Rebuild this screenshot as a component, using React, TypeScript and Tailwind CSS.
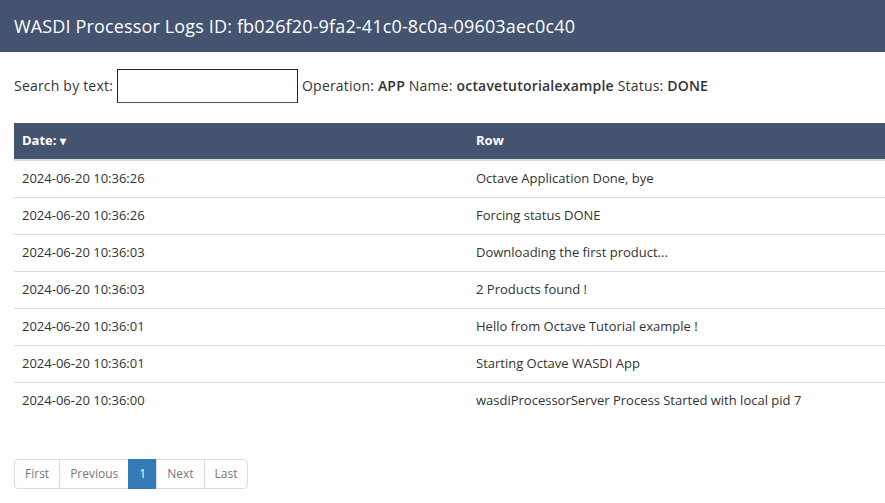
import React from 'react';

const rows = [
  { date: '2024-06-20 10:36:26', row: 'Octave Application Done, bye' },
  { date: '2024-06-20 10:36:26', row: 'Forcing status DONE' },
  { date: '2024-06-20 10:36:03', row: 'Downloading the first product...' },
  { date: '2024-06-20 10:36:03', row: '2 Products found !' },
  { date: '2024-06-20 10:36:01', row: 'Hello from Octave Tutorial example !' },
  { date: '2024-06-20 10:36:01', row: 'Starting Octave WASDI App' },
  { date: '2024-06-20 10:36:00', row: 'wasdiProcessorServer Process Started with local pid 7' },
];

const pages = ['First', 'Previous', '1', 'Next', 'Last'];

export default function App() {
  return (
    <div className="min-h-screen bg-white text-[#333] font-['Open_Sans',sans-serif]">
      {/* Header */}
      <div className="h-[52px] bg-[#435370] flex items-center px-[14px]">
        <h1 className="text-white text-[18px] tracking-[0.15px]">WASDI Processor Logs ID: fb026f20-9fa2-41c0-8c0a-09603aec0c40</h1>
      </div>

      <div className="pl-[14px]">
        {/* Search row */}
        <div className="flex items-center mt-[17px] text-[14px] tracking-[0.2px]">
          <span className="pb-[2px]">Search by text:</span>
          <input className="ml-[4px] w-[181px] h-[34px] border border-[#222] border-b-[#435370] outline-none" />
          <span className="ml-[4px] pb-[2px]">
            Operation: <b className="font-semibold">APP</b> Name: <b className="font-semibold">octavetutorialexample</b> Status:{' '}
            <b className="font-semibold">DONE</b>
          </span>
        </div>

        {/* Table */}
        <table className="w-full mt-[20px] border-collapse text-[13px]">
          <thead>
            <tr className="bg-[#435370] text-white h-[37px] border-b-2 border-[#ddd]">
              <th className="text-left font-bold px-[8px] w-[454px]">
                Date: <span className="text-[12px]">▾</span>
              </th>
              <th className="text-left font-bold px-[8px]">Row</th>
            </tr>
          </thead>
          <tbody>
            {rows.map((r, i) => (
              <tr key={i} className={`h-[37px] ${i < rows.length - 1 ? 'border-b border-[#ddd]' : ''}`}>
                <td className="px-[8px]">{r.date}</td>
                <td className="px-[8px]">{r.row}</td>
              </tr>
            ))}
          </tbody>
        </table>

        {/* Pagination */}
        <div className="flex mt-[40px] text-[12px]">
          {pages.map((p, i) => (
            <span
              key={p}
              className={`h-[30px] flex items-center px-[10px] border ${
                p === '1' ? 'bg-[#337ab7] border-[#337ab7] text-white' : 'border-[#ddd] text-[#777]'
              } ${i > 0 ? '-ml-px' : ''} ${i === 0 ? 'rounded-l' : ''} ${i === pages.length - 1 ? 'rounded-r' : ''}`}
            >
              {p}
            </span>
          ))}
        </div>
      </div>
    </div>
  );
}
